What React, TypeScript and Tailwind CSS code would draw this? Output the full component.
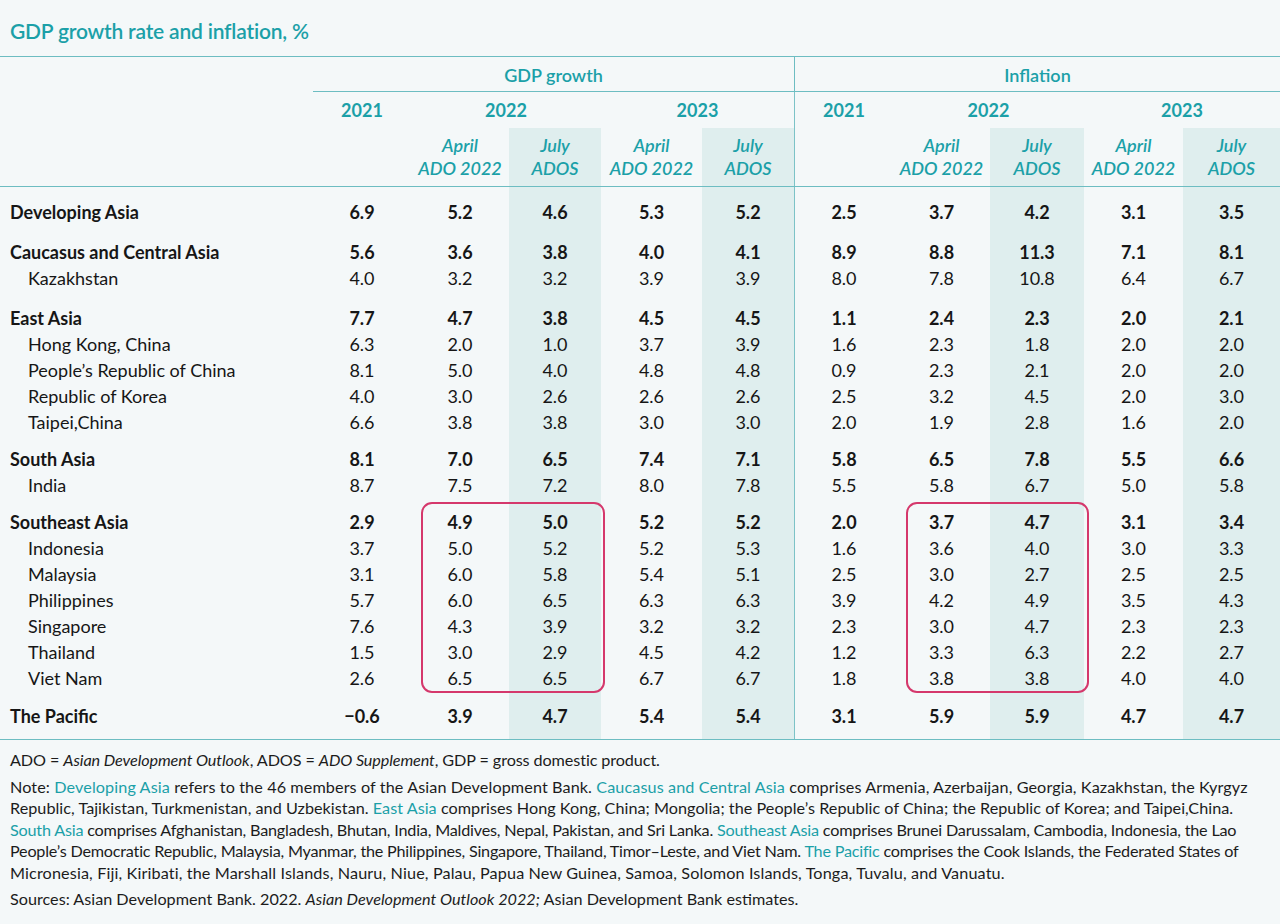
import React from 'react';

const TEAL = 'text-[#1ba0a8]';

type Row = { label: string; group?: boolean; pt?: number; v: string[] };

const ROWS: Row[] = [
  { label: 'Developing Asia', group: true, pt: 12, v: ['6.9', '5.2', '4.6', '5.3', '5.2', '2.5', '3.7', '4.2', '3.1', '3.5'] },
  { label: 'Caucasus and Central Asia', group: true, pt: 14, v: ['5.6', '3.6', '3.8', '4.0', '4.1', '8.9', '8.8', '11.3', '7.1', '8.1'] },
  { label: 'Kazakhstan', v: ['4.0', '3.2', '3.2', '3.9', '3.9', '8.0', '7.8', '10.8', '6.4', '6.7'] },
  { label: 'East Asia', group: true, pt: 14, v: ['7.7', '4.7', '3.8', '4.5', '4.5', '1.1', '2.4', '2.3', '2.0', '2.1'] },
  { label: 'Hong Kong, China', v: ['6.3', '2.0', '1.0', '3.7', '3.9', '1.6', '2.3', '1.8', '2.0', '2.0'] },
  { label: 'People’s Republic of China', v: ['8.1', '5.0', '4.0', '4.8', '4.8', '0.9', '2.3', '2.1', '2.0', '2.0'] },
  { label: 'Republic of Korea', v: ['4.0', '3.0', '2.6', '2.6', '2.6', '2.5', '3.2', '4.5', '2.0', '3.0'] },
  { label: 'Taipei,China', v: ['6.6', '3.8', '3.8', '3.0', '3.0', '2.0', '1.9', '2.8', '1.6', '2.0'] },
  { label: 'South Asia', group: true, pt: 11, v: ['8.1', '7.0', '6.5', '7.4', '7.1', '5.8', '6.5', '7.8', '5.5', '6.6'] },
  { label: 'India', v: ['8.7', '7.5', '7.2', '8.0', '7.8', '5.5', '5.8', '6.7', '5.0', '5.8'] },
  { label: 'Southeast Asia', group: true, pt: 11, v: ['2.9', '4.9', '5.0', '5.2', '5.2', '2.0', '3.7', '4.7', '3.1', '3.4'] },
  { label: 'Indonesia', v: ['3.7', '5.0', '5.2', '5.2', '5.3', '1.6', '3.6', '4.0', '3.0', '3.3'] },
  { label: 'Malaysia', v: ['3.1', '6.0', '5.8', '5.4', '5.1', '2.5', '3.0', '2.7', '2.5', '2.5'] },
  { label: 'Philippines', v: ['5.7', '6.0', '6.5', '6.3', '6.3', '3.9', '4.2', '4.9', '3.5', '4.3'] },
  { label: 'Singapore', v: ['7.6', '4.3', '3.9', '3.2', '3.2', '2.3', '3.0', '4.7', '2.3', '2.3'] },
  { label: 'Thailand', v: ['1.5', '3.0', '2.9', '4.5', '4.2', '1.2', '3.3', '6.3', '2.2', '2.7'] },
  { label: 'Viet Nam', v: ['2.6', '6.5', '6.5', '6.7', '6.7', '1.8', '3.8', '3.8', '4.0', '4.0'] },
  { label: 'The Pacific', group: true, pt: 12, v: ['−0.6', '3.9', '4.7', '5.4', '5.4', '3.1', '5.9', '5.9', '4.7', '4.7'] },
];

const GRID = 'grid grid-cols-[313px_98px_98px_92px_101px_92px_99px_97px_94px_99px_97px]';
// shaded "July ADOS" columns (index into values)
const SHADED = [2, 4, 7, 9];

function Hl({ children }: { children: React.ReactNode }) {
  return <span className={TEAL}>{children}</span>;
}

function SubHead({ shaded, month, sub }: { shaded?: boolean; month: string; sub: string }) {
  return (
    <div
      className={`flex flex-col items-center justify-start pt-[6px] italic font-semibold leading-[23px] ${TEAL} ${shaded ? 'bg-[#dfeeee]' : ''}`}
    >
      <span>{month}</span>
      <span>{sub}</span>
    </div>
  );
}

export default function App() {
  return (
    <div className="w-[1280px] h-[924px] bg-[#f4f8f9] text-[#161616] font-['Lato','Liberation_Sans',sans-serif] overflow-hidden">
      {/* Title */}
      <div className="h-[57px] flex items-center pl-[10px] pt-[6px] border-b-[1.5px] border-[#6dbdc2]">
        <h1 className={`text-[21px] font-semibold tracking-[-0.2px] ${TEAL}`}>GDP growth rate and inflation, %</h1>
      </div>

      {/* Header */}
      <div className={`${GRID} text-[18px]`}>
        <div className="col-start-1 row-span-3" />
        <div className={`col-span-5 h-[35px] flex items-center justify-center pt-[3px] font-semibold border-b-[1.5px] border-[#6dbdc2] ${TEAL}`}>
          GDP growth
        </div>
        <div className={`col-span-5 h-[35px] flex items-center justify-center pt-[3px] font-semibold border-b-[1.5px] border-l border-[#6dbdc2] ${TEAL}`}>
          Inflation
        </div>

        <div className={`h-[36px] flex items-center justify-center font-bold ${TEAL}`}>2021</div>
        <div className={`col-span-2 flex items-center justify-center font-bold ${TEAL}`}>2022</div>
        <div className={`col-span-2 flex items-center justify-center font-bold ${TEAL}`}>2023</div>
        <div className={`flex items-center justify-center font-bold border-l border-[#7cc3c7] ${TEAL}`}>2021</div>
        <div className={`col-span-2 flex items-center justify-center font-bold ${TEAL}`}>2022</div>
        <div className={`col-span-2 flex items-center justify-center font-bold ${TEAL}`}>2023</div>

        <div className="h-[58px]" />
        <SubHead month="April" sub="ADO 2022" />
        <SubHead month="July" sub="ADOS" shaded />
        <SubHead month="April" sub="ADO 2022" />
        <SubHead month="July" sub="ADOS" shaded />
        <div className="border-l border-[#7cc3c7]" />
        <SubHead month="April" sub="ADO 2022" />
        <SubHead month="July" sub="ADOS" shaded />
        <SubHead month="April" sub="ADO 2022" />
        <SubHead month="July" sub="ADOS" shaded />
      </div>

      {/* Body */}
      <div className="relative border-t-[1.5px] border-b-[1.5px] border-[#6dbdc2] text-[18px]">
        {ROWS.map((r) => (
          <div key={r.label} className={GRID}>
            <div
              className={`flex items-end ${r.group ? 'pl-[10px] font-bold' : 'pl-[28px]'}`}
              style={{ paddingTop: r.pt ?? 0 }}
            >
              <span className="h-[26px] leading-[26px] whitespace-nowrap">{r.label}</span>
            </div>
            {r.v.map((val, i) => (
              <div
                key={i}
                className={`flex items-end justify-center ${r.group ? 'font-bold' : ''} ${SHADED.includes(i) ? 'bg-[#dfeeee]' : ''} ${i === 5 ? 'border-l border-[#7cc3c7]' : ''}`}
                style={{ paddingTop: r.pt ?? 0 }}
              >
                <span className="h-[26px] leading-[26px]">{val}</span>
              </div>
            ))}
          </div>
        ))}
        <div className={`${GRID} h-[10px]`}>
          <div />
          <div />
          <div />
          <div className="bg-[#dfeeee]" />
          <div />
          <div className="bg-[#dfeeee]" />
          <div className="border-l border-[#7cc3c7]" />
          <div />
          <div className="bg-[#dfeeee]" />
          <div />
          <div className="bg-[#dfeeee]" />
        </div>

        {/* highlight boxes */}
        <div className="absolute left-[421px] top-[315px] w-[184px] h-[191px] rounded-[11px] border-2 border-[#d5386c]" />
        <div className="absolute left-[906px] top-[315px] w-[183px] h-[191px] rounded-[11px] border-2 border-[#d5386c]" />
      </div>

      {/* Notes */}
      <div className="px-[10px] pt-[9px] text-[16.2px] leading-[21.5px] text-[#1c1c1c]">
        <p className="whitespace-nowrap tracking-[-0.1px]">
          ADO = <i>Asian Development Outlook</i>, ADOS = <i>ADO Supplement</i>, GDP = gross domestic product.
        </p>
        <p className="mt-[5px] whitespace-nowrap">
          <span className="block tracking-[0.1px]">
            Note: <Hl>Developing Asia</Hl> refers to the 46 members of the Asian Development Bank. <Hl>Caucasus and Central Asia</Hl> comprises Armenia, Azerbaijan, Georgia, Kazakhstan, the Kyrgyz
          </span>
          <span className="block tracking-[0.03px]">
            Republic, Tajikistan, Turkmenistan, and Uzbekistan. <Hl>East Asia</Hl> comprises Hong Kong, China; Mongolia; the People’s Republic of China; the Republic of Korea; and Taipei,China.
          </span>
          <span className="block tracking-[-0.2px]">
            <Hl>South Asia</Hl> comprises Afghanistan, Bangladesh, Bhutan, India, Maldives, Nepal, Pakistan, and Sri Lanka. <Hl>Southeast Asia</Hl> comprises Brunei Darussalam, Cambodia, Indonesia, the Lao
          </span>
          <span className="block tracking-[-0.22px]">
            People’s Democratic Republic, Malaysia, Myanmar, the Philippines, Singapore, Thailand, Timor–Leste, and Viet Nam. <Hl>The Pacific</Hl> comprises the Cook Islands, the Federated States of
          </span>
          <span className="block tracking-[0.13px]">
            Micronesia, Fiji, Kiribati, the Marshall Islands, Nauru, Niue, Palau, Papua New Guinea, Samoa, Solomon Islands, Tonga, Tuvalu, and Vanuatu.
          </span>
        </p>
        <p className="mt-[5px] whitespace-nowrap">
          Sources: Asian Development Bank. 2022. <i>Asian Development Outlook 2022;</i> Asian Development Bank estimates.
        </p>
      </div>
    </div>
  );
}
